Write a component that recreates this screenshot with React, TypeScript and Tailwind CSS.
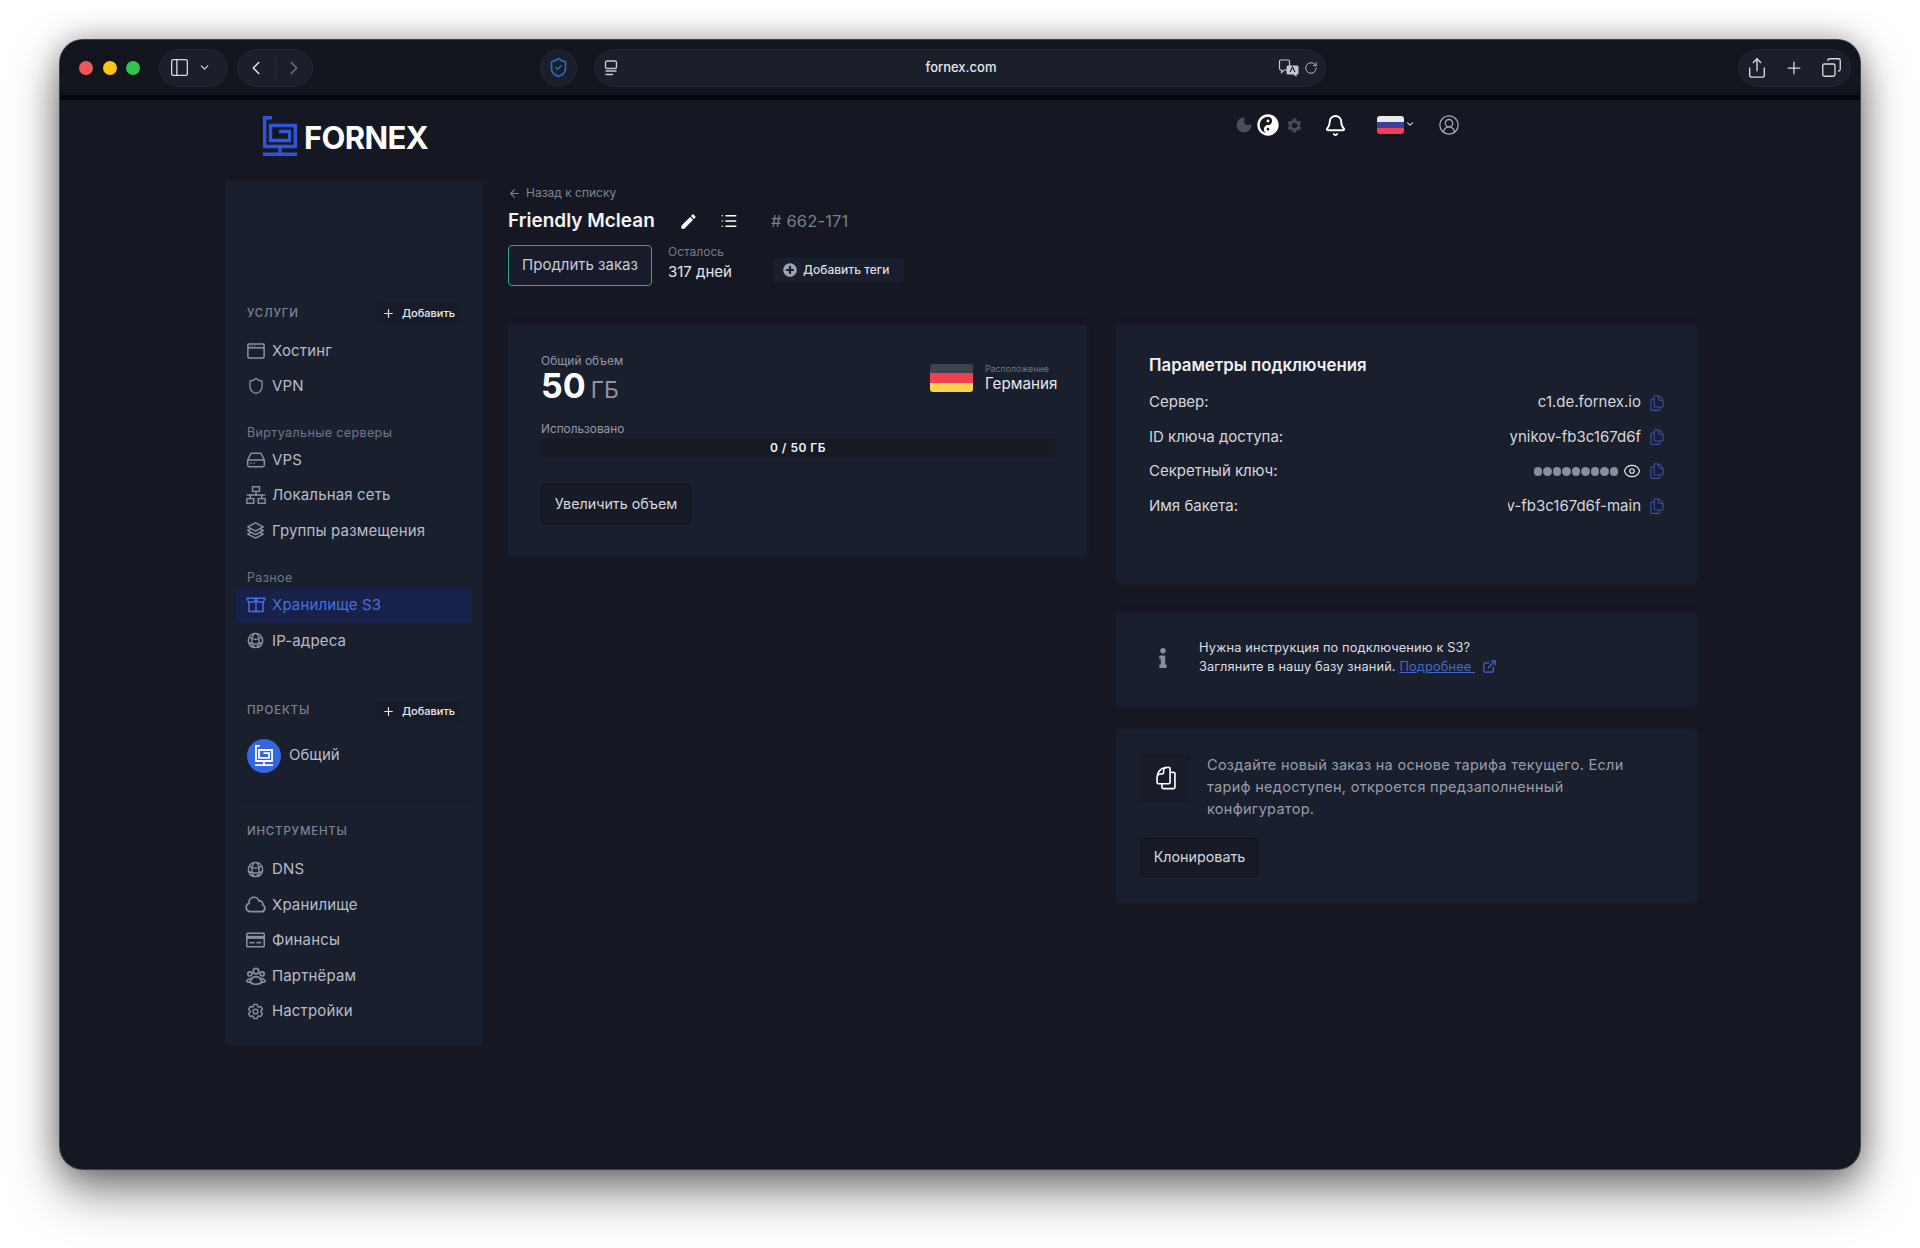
import {
  ArrowLeft,
  ChevronDown,
  ChevronLeft,
  ChevronRight,
  CircleUserRound,
  Bell,
  Copy,
  ExternalLink,
  HardDrive,
  List,
  Moon,
  PanelLeft,
  Plus,
  RotateCw,
  Share,
  Shield,
  ShieldCheck,
} from 'lucide-react';
import { FaInfo, FaPlusCircle, FaYinYang } from 'react-icons/fa';
import { MdEdit } from 'react-icons/md';
import {
  HiCog6Tooth,
  HiOutlineCloud,
  HiOutlineCog6Tooth,
  HiOutlineDocumentDuplicate,
  HiOutlineEye,
  HiOutlineGlobeAlt,
  HiOutlineSquare3Stack3D,
  HiOutlineUserGroup,
} from 'react-icons/hi2';

type IconProps = { className?: string; strokeWidth?: number };

const FornexMark = ({ className }: { className: string }) => (
  <svg viewBox="0 0 34 40" fill="none" stroke="currentColor" strokeWidth="3.4" className={className}>
    <path d="M9 1.7H1.7V30.5H32.3V9.5H7.5V24.5H26.5V15.5H16" />
    <path d="M17 30.5V38M0 38.3H34" />
  </svg>
);

const TranslateIcon = () => (
  <svg viewBox="0 0 22 18" fill="none" className="w-[22px] h-[18px]">
    <path d="M1.5 2.5a1.5 1.5 0 0 1 1.5-1.5h7a1.5 1.5 0 0 1 1.5 1.5v7a1.5 1.5 0 0 1-1.5 1.5H6l-2.5 2.5V11H3a1.5 1.5 0 0 1-1.5-1.5z" stroke="#c4c7cf" strokeWidth="1.2" />
    <path d="M10 6.5h9a1.5 1.5 0 0 1 1.5 1.5v6a1.5 1.5 0 0 1-1.5 1.5h-.5V18L15.5 15.5H10A1.5 1.5 0 0 1 8.5 14V8A1.5 1.5 0 0 1 10 6.5z" fill="#c4c7cf" />
    <path d="M12 13l2.5-5 2.5 5" stroke="#14171f" strokeWidth="1.1" />
  </svg>
);

const ReaderIcon = () => (
  <svg viewBox="0 0 14 16" fill="none" stroke="#c4c7cf" strokeWidth="1.4" className="w-[14px] h-[16px]">
    <rect x="1.5" y="1" width="11" height="7.5" rx="1.5" />
    <path d="M1.5 11H12.5M1.5 14.5H9" />
  </svg>
);

const HostingIcon = ({ className }: IconProps) => (
  <svg viewBox="0 0 18 16" fill="none" stroke="currentColor" strokeWidth="1.5" className={className}>
    <rect x="0.9" y="1" width="16.2" height="14" rx="1.2" />
    <path d="M1 4.8H17" />
    <path d="M3 2.9h.9M5.2 2.9h.9M7.4 2.9h.9" strokeWidth="1" />
  </svg>
);

const NetworkIcon = ({ className }: IconProps) => (
  <svg viewBox="0 0 20 18" fill="none" stroke="currentColor" strokeWidth="1.4" className={className}>
    <rect x="6.5" y="0.8" width="7" height="4.6" />
    <rect x="0.8" y="12.6" width="7" height="4.6" />
    <rect x="12.2" y="12.6" width="7" height="4.6" />
    <path d="M10 5.4V9M0.8 9H19.2M4.3 9V12.6M15.7 9V12.6" />
  </svg>
);

const BoxIcon = ({ className }: IconProps) => (
  <svg viewBox="0 0 20 16" fill="none" stroke="currentColor" strokeWidth="1.5" strokeLinejoin="round" className={className}>
    <path d="M3 5V14.6H17V5" />
    <path d="M1 1.2H19L17.4 5H12L10 1.8 8 5H2.6z" />
    <path d="M10 2V14.6" />
  </svg>
);

const CardIcon = ({ className }: IconProps) => (
  <svg viewBox="0 0 20 16" fill="none" className={className}>
    <rect x="0.8" y="0.8" width="18.4" height="14.4" rx="1" stroke="currentColor" strokeWidth="1.6" />
    <rect x="1" y="3.6" width="18" height="3.2" fill="currentColor" />
    <path d="M3.5 10.8H9" stroke="currentColor" strokeWidth="1.6" />
    <path d="M11 10.8h5" stroke="currentColor" strokeWidth="1.6" />
  </svg>
);

const Pill = ({ className, children }: { className: string; children: React.ReactNode }) => (
  <div className={`h-[38px] rounded-full bg-[#1b1f29] border border-[#232733] flex items-center shrink-0 ${className}`}>
    {children}
  </div>
);

const NavItem = ({
  icon: Icon,
  label,
  active,
  iconClass = 'w-[18px] h-[18px]',
}: {
  icon: React.ComponentType<IconProps>;
  label: string;
  active?: boolean;
  iconClass?: string;
}) => (
  <div
    className={`h-[35.5px] flex items-center gap-[7px] -mx-[11px] px-[10px] rounded-[3px] text-[15px] tracking-[0.01em] ${
      active ? 'bg-[#172149] text-[#4a6fe3]' : 'text-[#b8bcc8]'
    }`}
  >
    <span className={`w-[19px] flex justify-center ${active ? 'text-[#4a6fe3]' : 'text-[#8c91a1]'}`}>
      <Icon className={`shrink-0 ${iconClass}`} strokeWidth={1.8} />
    </span>
    {label}
  </div>
);

const SectionHead = ({ title, add, className }: { title: string; add?: boolean; className?: string }) => (
  <div className={`h-[21px] flex items-center justify-between ${className ?? ''}`}>
    <span className="text-[11.5px] font-medium tracking-[0.07em] text-[#7f8493]">{title}</span>
    {add && (
      <span className="w-[85px] h-[21px] flex items-center justify-center gap-[7px] bg-[#181c29] rounded text-[11px] font-medium text-[#e8eaee]">
        <Plus className="w-[13px] h-[13px]" strokeWidth={2.2} />
        Добавить
      </span>
    )}
  </div>
);

const SubLabel = ({ children, className }: { children: string; className: string }) => (
  <div className={`flex items-center text-[12.5px] tracking-[0.03em] text-[#727786] ${className}`}>{children}</div>
);

const ConnRow = ({ label, children }: { label: string; children: React.ReactNode }) => (
  <div className="h-[34.4px] flex items-center text-[15px] text-[#d5d7dd]">
    <span className="flex-1">{label}</span>
    {children}
    <HiOutlineDocumentDuplicate className="ml-[7px] w-[18px] h-[18px] text-[#3d4f9e] shrink-0" />
  </div>
);

const Card = ({ className, children }: { className: string; children: React.ReactNode }) => (
  <div className={`bg-[#1a1f2d] rounded-[4px] shadow-[0_0_6px_rgba(26,31,45,0.7)] ${className}`}>{children}</div>
);

export default function App() {
  return (
    <div className="w-[1920px] h-[1248px] bg-white pt-[40px] pl-[60px] font-['Inter',sans-serif] overflow-hidden">
      <div className="w-[1800px] h-[1129px] rounded-[23px] bg-[#151823] overflow-hidden flex flex-col shadow-[0_0_0_1px_#3f4149,0_22px_48px_rgba(0,0,0,0.5),0_0_30px_rgba(0,0,0,0.3)]">
        {/* toolbar */}
        <div className="h-[60px] shrink-0 bg-[#12151d] border-b-[5px] border-[#07080c] flex items-center pl-[19px] pr-[9px]">
          <div className="flex gap-[9.5px] shrink-0">
            <span className="w-[14px] h-[14px] rounded-full bg-[#f0565a]" />
            <span className="w-[14px] h-[14px] rounded-full bg-[#fcc419]" />
            <span className="w-[14px] h-[14px] rounded-full bg-[#32c24d]" />
          </div>
          <Pill className="ml-[19px] w-[69px] pl-[9px] gap-[8px]">
            <PanelLeft className="w-[21px] h-[21px] text-[#d8dade]" strokeWidth={1.5} />
            <ChevronDown className="w-[13px] h-[13px] text-[#d8dade]" strokeWidth={2} />
          </Pill>
          <Pill className="ml-[9px] w-[76px]">
            <span className="flex-1 flex justify-center">
              <ChevronLeft className="w-[22px] h-[22px] text-[#e4e6ea]" strokeWidth={1.6} />
            </span>
            <span className="w-px h-[22px] bg-[#2a2e39]" />
            <span className="flex-1 flex justify-center">
              <ChevronRight className="w-[22px] h-[22px] text-[#6f7480]" strokeWidth={1.6} />
            </span>
          </Pill>
          <Pill className="ml-[227px] w-[37px] justify-center">
            <ShieldCheck className="w-[21px] h-[21px] text-[#2468c9]" strokeWidth={2} />
          </Pill>
          <Pill className="ml-[17px] w-[732px] pl-[9px] pr-[7px] justify-between">
            <span className="w-[70px]">
              <ReaderIcon />
            </span>
            <span className="text-[13px] font-medium text-[#e4e6ea]">fornex.com</span>
            <span className="w-[70px] flex items-center justify-end gap-[4px]">
              <TranslateIcon />
              <RotateCw className="w-[14px] h-[14px] text-[#c4c7cf]" strokeWidth={1.5} />
            </span>
          </Pill>
          <Pill className="ml-auto w-[113px] justify-between pl-[7px] pr-[8px]">
            <Share className="w-[22px] h-[24px] text-[#d8dade]" strokeWidth={1.5} />
            <Plus className="mr-[2px] w-[20px] h-[20px] text-[#d8dade]" strokeWidth={1.5} />
            <Copy className="w-[21px] h-[21px] text-[#d8dade] -scale-x-100" strokeWidth={1.5} />
          </Pill>
        </div>

        {/* page */}
        <div className="pl-[165px] w-[1637px]">
          <div className="h-[81px] flex items-start">
            <div className="ml-[38px] mt-[16px] flex items-start gap-[7px]">
              <FornexMark className="w-[34px] h-[40px] text-[#2f55d8]" />
              <span className="mt-[2px] text-[31px] leading-[40px] font-bold text-white tracking-[-0.02em]">FORNEX</span>
            </div>
            <div className="ml-auto mr-[237px] mt-[14px] flex items-center h-[22px]">
              <Moon className="w-[18px] h-[18px] text-[#4b4f5c]" fill="#4b4f5c" />
              <FaYinYang className="ml-[4px] w-[22px] h-[22px] text-white" />
              <HiCog6Tooth className="ml-[7px] w-[17px] h-[17px] text-[#474b58]" />
              <Bell className="ml-[21px] w-[23px] h-[23px] text-white" strokeWidth={2} />
              <div className="ml-[30px] w-[27px] h-[18px] rounded-[3px] overflow-hidden flex flex-col">
                <span className="flex-1 bg-[#e8eaee]" />
                <span className="flex-1 bg-[#3c3f9c]" />
                <span className="flex-1 bg-[#ef4058]" />
              </div>
              <ChevronDown className="ml-px w-[10px] h-[10px] text-white -mt-[3px]" strokeWidth={2.5} />
              <CircleUserRound className="ml-[23px] w-[22px] h-[22px] text-[#a5a9b5]" strokeWidth={1.4} />
            </div>
          </div>

          <div className="flex gap-[25px] items-start">
            {/* sidebar */}
            <aside className="w-[258px] h-[865px] shrink-0 rounded-[4px] bg-[#1a1f2d] px-[22px] pt-[122px]">
              <SectionHead title="УСЛУГИ" add />
              <div className="mt-[9px]">
                <NavItem icon={HostingIcon} label="Хостинг" iconClass="w-[18px] h-[16px]" />
                <NavItem icon={Shield} label="VPN" iconClass="w-[18px] h-[18px]" />
              </div>
              <SubLabel className="h-[17px] mt-[21px]">Виртуальные серверы</SubLabel>
              <NavItem icon={HardDrive} label="VPS" iconClass="w-[20px] h-[20px]" />
              <NavItem icon={NetworkIcon} label="Локальная сеть" iconClass="w-[20px] h-[18px]" />
              <NavItem icon={HiOutlineSquare3Stack3D} label="Группы размещения" iconClass="w-[19px] h-[19px]" />
              <SubLabel className="h-[18px] mt-[21px]">Разное</SubLabel>
              <NavItem icon={BoxIcon} label="Хранилище S3" iconClass="w-[20px] h-[16px]" active />
              <NavItem icon={HiOutlineGlobeAlt} label="IP-адреса" iconClass="w-[19px] h-[19px]" />
              <SectionHead title="ПРОЕКТЫ" add className="mt-[42px]" />
              <div className="mt-[17px] flex items-center gap-[8px] text-[15px] text-[#b8bcc8]">
                <span className="w-[34px] h-[34px] rounded-full bg-[#3566e0] flex items-center justify-center">
                  <FornexMark className="w-[18px] h-[21px] text-white" />
                </span>
                Общий
              </div>
              <div className="mt-[33px] -mx-[10px] border-t border-[#1d2231]" />
              <SectionHead title="ИНСТРУМЕНТЫ" className="mt-[15px]" />
              <div className="mt-[9px]">
                <NavItem icon={HiOutlineGlobeAlt} label="DNS" iconClass="w-[19px] h-[19px]" />
                <NavItem icon={HiOutlineCloud} label="Хранилище" iconClass="w-[23px] h-[23px]" />
                <NavItem icon={CardIcon} label="Финансы" iconClass="w-[19px] h-[16px]" />
                <NavItem icon={HiOutlineUserGroup} label="Партнёрам" iconClass="w-[22px] h-[22px]" />
                <NavItem icon={HiOutlineCog6Tooth} label="Настройки" iconClass="w-[19px] h-[19px]" />
              </div>
            </aside>

            {/* main */}
            <main className="w-[1189px]">
              <div className="h-[24px] flex items-center gap-[5px] text-[12px] text-[#80848f]">
                <ArrowLeft className="w-[13px] h-[13px]" />
                Назад к списку
              </div>
              <div className="h-[34px] pb-[2px] flex items-center">
                <span className="text-[19px] font-semibold text-[#f2f3f5] w-[171px]">Friendly Mclean</span>
                <MdEdit className="w-[19px] h-[19px] text-white" />
                <List className="ml-[22px] w-[18px] h-[18px] text-white" strokeWidth={2} />
                <span className="ml-[33px] text-[16.5px] text-[#7b7f8b] tracking-[0.01em]"># 662-171</span>
              </div>
              <div className="mt-[6px] flex items-start">
                <div className="w-[144px] h-[41px] rounded-[4px] border border-[#37a58c] bg-[#181c2a] flex items-center justify-center text-[15px] text-[#c9ccd3]">
                  Продлить заказ
                </div>
                <div className="ml-[16px] -mt-[3px]">
                  <div className="text-[12px] leading-[20px] text-[#757a88]">Осталось</div>
                  <div className="text-[15px] leading-[20px] text-[#e4e6ea]">317 дней</div>
                </div>
                <div className="ml-[41px] mt-[13px] w-[131px] h-[24px] rounded-[3px] bg-[#1a1f2d] flex items-center pl-[10px] gap-[6px] text-[12px] font-medium text-[#dcdee3]">
                  <FaPlusCircle className="w-[14px] h-[14px] text-[#9ea3b0]" />
                  Добавить теги
                </div>
              </div>

              <div className="mt-[39px] grid grid-cols-[579px_581px] gap-x-[29px] items-start">
                <Card className="h-[232px] pt-[28px] pl-[33px] pr-[31px]">
                  <div className="flex items-start justify-between">
                    <div>
                      <div className="text-[12px] leading-[16px] text-[#9499a6]">Общий объем</div>
                      <div className="flex items-baseline gap-[5px] text-white leading-[40px] -mt-[3px]">
                        <span className="text-[34px] font-bold">50</span>
                        <span className="text-[23px] text-[#8f94a2]">ГБ</span>
                      </div>
                    </div>
                    <div className="flex items-start mt-[11px]">
                      <div className="w-[43px] h-[28px] rounded-[3px] overflow-hidden flex flex-col">
                        <span className="flex-1 bg-[#3f4350]" />
                        <span className="flex-1 bg-[#f04050]" />
                        <span className="flex-1 bg-[#fcd34d]" />
                      </div>
                      <div className="ml-[12px] -mt-[1px] w-[71px]">
                        <div className="text-[8.8px] leading-[12px] text-[#727786]">Расположение</div>
                        <div className="text-[15.2px] leading-[18px] text-[#e4e6ea]">Германия</div>
                      </div>
                    </div>
                  </div>
                  <div className="mt-[11px] text-[11.8px] leading-[16px] text-[#9499a6]">Использовано</div>
                  <div className="mt-px mr-px h-[19px] rounded-[2px] bg-[#161a25] flex items-center justify-center text-[12px] font-semibold tracking-[0.04em] text-[#f2f3f5]">
                    0 / 50 ГБ
                  </div>
                  <div className="mt-[27px] w-[150px] h-[40px] rounded-[4px] border border-[#0f121a] bg-[#171b28] flex items-center justify-center text-[14.3px] text-[#d5d7dd]">
                    Увеличить объем
                  </div>
                </Card>

                <div className="flex flex-col">
                  <Card className="h-[259px] pt-[27px] pl-[33px] pr-[31px]">
                    <div className="text-[16.8px] leading-[26px] font-semibold text-[#eff0f3]">Параметры подключения</div>
                    <div className="mt-[7.5px]">
                      <ConnRow label="Сервер:">
                        <span>c1.de.fornex.io</span>
                      </ConnRow>
                      <ConnRow label="ID ключа доступа:">
                        <span>ynikov-fb3c167d6f</span>
                      </ConnRow>
                      <ConnRow label="Секретный ключ:">
                        <span className="flex items-center gap-[1px] mr-[5px]">
                          {Array.from({ length: 9 }).map((_, i) => (
                            <span key={i} className="w-[8.5px] h-[8.5px] rounded-full bg-[#8a8e9c]" />
                          ))}
                        </span>
                        <HiOutlineEye className="w-[18px] h-[18px] text-[#e4e6ea]" />
                      </ConnRow>
                      <ConnRow label="Имя бакета:">
                        <span className="w-[133px] flex justify-end overflow-hidden whitespace-nowrap">
                          <span className="shrink-0">ynikov-fb3c167d6f-main</span>
                        </span>
                      </ConnRow>
                    </div>
                  </Card>

                  <Card className="mt-[29px] h-[93px] pb-[5px] flex items-center pl-[41px]">
                    <FaInfo className="mt-[2px] w-[12px] h-[20px] text-[#8a8e9c]" />
                    <div className="ml-[30px] text-[12.8px] leading-[19px] text-[#dcdee3] tracking-[0.01em]">
                      <div>Нужна инструкция по подключению к S3?</div>
                      <div className="flex items-center">
                        Загляните в нашу базу знаний.&nbsp;
                        <span className="text-[#4468c8] underline">Подробнее&nbsp;</span>
                        <ExternalLink className="ml-[7px] w-[15px] h-[15px] text-[#4468c8]" />
                      </div>
                    </div>
                  </Card>

                  <Card className="mt-[23px] h-[174px] pt-[24px] pl-[25px]">
                    <div className="flex items-start">
                      <div className="w-[49px] h-[50px] rounded-[4px] bg-[#181c29] flex items-center justify-center">
                        <HiOutlineDocumentDuplicate className="w-[26px] h-[26px] text-white -scale-x-100" />
                      </div>
                      <p className="ml-[17px] mt-[0.5px] w-[450px] text-[14.5px] leading-[22px] tracking-[0.02em] text-[#989daa]">
                        Создайте новый заказ на основе тарифа текущего. Если тариф недоступен, откроется предзаполненный конфигуратор.
                      </p>
                    </div>
                    <div className="mt-[18px] w-[117px] h-[39px] rounded-[4px] border border-[#0f121a] bg-[#171b28] flex items-center justify-center text-[14.3px] text-[#d5d7dd]">
                      Клонировать
                    </div>
                  </Card>
                </div>
              </div>
            </main>
          </div>
        </div>
      </div>
    </div>
  );
}
